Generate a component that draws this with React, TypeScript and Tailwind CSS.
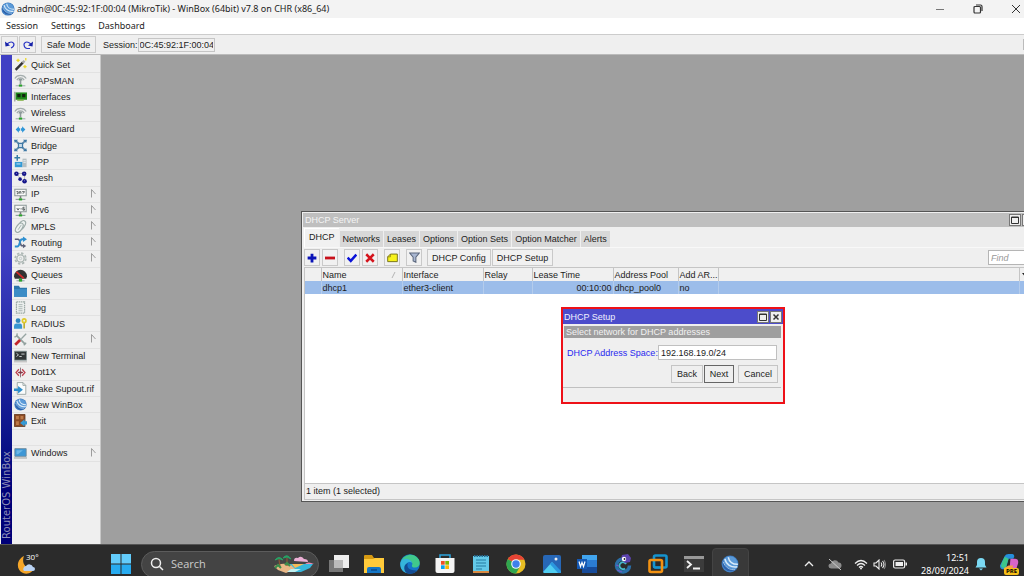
import { useState } from "react";
import type { ReactNode } from "react";

interface MenuEntry {
  label: string;
  icon: ReactNode;
  submenu?: boolean;
}

// --- Icons ---

function Icon({ children, className = "size-[13px]" }: { children: ReactNode; className?: string }) {
  return (
    <svg viewBox="0 0 16 16" className={`${className} shrink-0`} fill="none" aria-hidden="true">
      {children}
    </svg>
  );
}

const antenna = (
  <Icon>
    <path d="M1 5.5C4 .5 12 .5 15 5.5M3.5 7.500C5.500 4 10.500 4 12.500 7.500" stroke="#a4adad" strokeWidth="1.500" />
    <path d="M5.500 8a2.500 2.500 0 015 0zM7 7h2v6H7z" fill="#8d9999" />
    <path d="M2 14.500h12" stroke="#9aa" strokeWidth="1.200" />
    <path d="M6 13h4v2.500H6z" fill="#29a329" />
  </Icon>
);

const netBoard = (text: string) => (
  <Icon>
    <path d="M1 1.500h14v8H1z" fill="#f8f8f8" stroke="#8b9797" strokeWidth="1.300" />
    <path d={text} stroke="#555f5f" strokeWidth="1.200" />
    <path d="M7 10h2v3H7z" fill="#777" />
    <path d="M2 14h12" stroke="#899" strokeWidth="1.300" />
    <path d="M6 12.800h4v2.500H6z" fill="#29a329" />
  </Icon>
);

function WinBoxLogo({ className }: { className?: string }) {
  return (
    <Icon className={className}>
      <circle cx="8" cy="8" r="7.500" fill="#3a78bd" />
      <circle cx="8" cy="8" r="6.800" fill="#5b9ad8" />
      <path d="M2 4.500C3 10 8 13.500 14 12.500 11 15.500 5.500 15.500 2.500 11.500 1 9 1 6.500 2 4.500z" fill="#2b62ac" />
      <path d="M3.500 3.500C4.500 8.500 9 11.500 14.500 10.500M6.500 2C7 6 10.500 8.500 15 8.200" stroke="#d9ebfa" strokeWidth="1.300" />
      <path d="M2 6C3.500 11 8 13.500 12.500 13" stroke="#a9cdec" strokeWidth=".8" />
    </Icon>
  );
}

const menuEntries: MenuEntry[] = [
  {
    label: "Quick Set",
    icon: (
      <Icon>
        <path d="M2 14.500L11 5.500" stroke="#333" strokeWidth="3" />
        <path d="M10.500 6L13 3.500" stroke="#aaa" strokeWidth="3" />
        <path d="M5 1v4M3 3h4M13.500 8.500v4M11.500 10.500h4M14.500 0v3" stroke="#ecd826" strokeWidth="1.600" />
      </Icon>
    ),
  },
  { label: "CAPsMAN", icon: antenna },
  {
    label: "Interfaces",
    icon: (
      <Icon>
        <path d="M1 2v12" stroke="#9a9a9a" strokeWidth="1.500" />
        <path d="M2 3h14v9H2z" fill="#218a1c" />
        <path d="M4 5h4v4H4zM10 5h4v4h-4z" fill="#12230f" />
        <path d="M4 12.500h8" stroke="#7cae3d" strokeWidth="1.500" />
      </Icon>
    ),
  },
  { label: "Wireless", icon: antenna },
  {
    label: "WireGuard",
    icon: (
      <Icon>
        <path d="M2 8l4-4v2.500h1.500v3H6V12zM14 8l-4-4v2.500H8.500v3H10V12z" fill="#2e96d8" />
      </Icon>
    ),
  },
  {
    label: "Bridge",
    icon: (
      <Icon>
        <path d="M2 2l12 12M14 2L2 14" stroke="#5d88ab" strokeWidth="2.200" />
        <path d="M5.500 5.500h5v5h-5z" fill="#c9dce9" stroke="#3e78a5" strokeWidth="1.500" />
        <path d="M0 1h5L1 5zM16 1h-5l4 4zM0 15h5L1 11zM16 15h-5l4-4z" fill="#3e78a5" />
      </Icon>
    ),
  },
  {
    label: "PPP",
    icon: (
      <Icon>
        <path d="M4 0v7M.500 3.500h7" stroke="#367ca6" strokeWidth="1.800" />
        <path d="M1 8.500h9.500V15H1z" fill="#349ad5" />
        <path d="M10.500 4.500h5V15h-5z" fill="#b6bfc2" />
        <path d="M3 11h5M11.500 7h3M11.500 9h3" stroke="#eaf5fa" />
      </Icon>
    ),
  },
  {
    label: "Mesh",
    icon: (
      <Icon>
        <path d="M3 3h10M3 3l5 7M13 3v9" stroke="#777" strokeDasharray="1.500 1" />
        <circle cx="3" cy="3.500" r="2.800" fill="#17178a" />
        <circle cx="12.500" cy="3.500" r="2.800" fill="#17178a" />
        <circle cx="7.500" cy="10" r="2.200" fill="#17178a" />
        <circle cx="13" cy="12.500" r="2.800" fill="#17178a" />
        <path d="M2.500 3h1M12 3h1M12.500 12h1" stroke="#a9a9e6" />
      </Icon>
    ),
  },
  { label: "IP", icon: netBoard("M3 4.500h2v2.500H3.500M6.500 7V4.500h2V7M10 4.500h3L11 7"), submenu: true },
  { label: "IPv6", icon: netBoard("M3.500 5l1.500 2.500L6.500 5M8 6h1.500M13 4h-2v3.500h2V6h-2"), submenu: true },
  {
    label: "MPLS",
    icon: (
      <Icon>
        <ellipse cx="9.500" cy="6.500" rx="3.500" ry="6.500" transform="rotate(35 9.500 6.500)" fill="#eef2f1" stroke="#9caba8" strokeWidth="1.400" />
        <ellipse cx="6.500" cy="9.500" rx="3.500" ry="6.500" transform="rotate(35 6.500 9.500)" fill="#eef2f1" stroke="#9caba8" strokeWidth="1.400" />
        <path d="M5 12l4-6" stroke="#a5b4b1" strokeWidth="1.200" />
      </Icon>
    ),
    submenu: true,
  },
  {
    label: "Routing",
    icon: (
      <Icon>
        <path d="M1 4h4c3 0 2 8 5 8h2" stroke="#5a5f78" strokeWidth="2" />
        <path d="M1 13h3c4 0 2-9 6-9h2" stroke="#2e8fd0" strokeWidth="2.400" />
        <path d="M11 .500l5 3.500-5 3.500z" fill="#2e8fd0" />
        <path d="M11 9.500l4 2.700-4 2.800z" fill="#5a5f78" />
      </Icon>
    ),
    submenu: true,
  },
  {
    label: "System",
    icon: (
      <Icon>
        <circle cx="8" cy="8" r="6.500" stroke="#aeb8b6" strokeWidth="2.200" strokeDasharray="2.900 2.200" />
        <circle cx="8" cy="8" r="4.500" stroke="#a9b4b1" strokeWidth="1.600" fill="#efefef" />
        <circle cx="8" cy="8" r="1.500" stroke="#b8c2c0" />
      </Icon>
    ),
    submenu: true,
  },
  {
    label: "Queues",
    icon: (
      <Icon>
        <path d="M0 9a8 8 0 0116 0l-1 3H1z" fill="#333" />
        <path d="M3 3.500l9 8" stroke="#d42b2b" strokeWidth="2.200" />
        <path d="M3 14.500h10" stroke="#789" />
        <path d="M6 12h4v3.500H6z" fill="#29a329" />
      </Icon>
    ),
  },
  {
    label: "Files",
    icon: (
      <Icon>
        <path d="M0 1h6l1.500 2.500H16v11H0z" fill="#2b75ab" />
        <path d="M0 5h16v9.500H0z" fill="#3b8cc6" />
      </Icon>
    ),
  },
  {
    label: "Log",
    icon: (
      <Icon>
        <path d="M3 1h10v14H3z" fill="#edf0ef" stroke="#9daaa7" strokeWidth="1.500" strokeDasharray="2 .7" />
        <path d="M5.500 4.500h5M5.500 7h5M5.500 9.500h5M5.500 12h5" stroke="#9daaa7" />
      </Icon>
    ),
  },
  {
    label: "RADIUS",
    icon: (
      <Icon>
        <circle cx="5" cy="4.500" r="3" fill="#2f86bf" />
        <path d="M0 14.500V11q0-3 3-3h4q3 0 3 3v3.500z" fill="#3a96d1" />
        <path d="M12.500 7v7" stroke="#b7a51c" strokeWidth="1.800" />
        <circle cx="12.500" cy="4.500" r="2.200" stroke="#dfca29" strokeWidth="2" />
      </Icon>
    ),
  },
  {
    label: "Tools",
    icon: (
      <Icon>
        <path d="M3 3l11 11" stroke="#91a09e" strokeWidth="2.200" />
        <path d="M.500 4.500q3 1 3.500-4M12 15l3-3" stroke="#91a09e" strokeWidth="1.600" />
        <path d="M9 7l6-6" stroke="#96a4a2" strokeWidth="1.600" />
        <path d="M1.500 14.500l6-6" stroke="#c2252c" strokeWidth="3.400" />
      </Icon>
    ),
    submenu: true,
  },
  {
    label: "New Terminal",
    icon: (
      <Icon>
        <path d="M.500 1.500h15v11H.500z" fill="#303536" stroke="#899" />
        <path d="M3 4l2.500 2L3 8M6.500 8h3M9 5h4" stroke="#e8eeee" />
        <path d="M0 14.500h16" stroke="#aaa" />
      </Icon>
    ),
  },
  {
    label: "Dot1X",
    icon: (
      <Icon>
        <path d="M6 4L2.500 8 6 12M10 4l3.500 4-3.500 4" stroke="#be4452" strokeWidth="1.600" />
        <path d="M8 2v12" stroke="#775d68" />
        <path d="M5 8h6" stroke="#8a3848" strokeWidth="1.500" />
        <circle cx="8" cy="8" r="1.500" fill="#8a3848" />
      </Icon>
    ),
  },
  {
    label: "Make Supout.rif",
    icon: (
      <Icon>
        <path d="M4 .700h7l3.500 3.500v11H4z" fill="#fafcfc" stroke="#8f9d9b" />
        <path d="M11 .700v3.500h3.500" stroke="#8f9d9b" />
        <path d="M0 8h5V5l6 4.500L5 14v-3H0z" fill="#2d8ecb" />
      </Icon>
    ),
  },
  { label: "New WinBox", icon: <WinBoxLogo className="size-[13px]" /> },
  {
    label: "Exit",
    icon: (
      <Icon>
        <path d="M.500.500h13v15H.500z" fill="#8d4c25" stroke="#5f3218" />
        <path d="M2.500 2.500h3.500v4H2.500zM8 2.500h3.500v4H8zM2.500 9h3.500v4.500H2.500z" fill="#bd7a49" />
        <path d="M16 9h-3V6.500L7.500 11l5.500 4.500V13h3z" fill="#349ad5" />
      </Icon>
    ),
  },
];

const windowsEntry: MenuEntry = {
  label: "Windows",
  icon: (
    <Icon>
      <path d="M1 2h14v9.500H1z" fill="#3d97d6" stroke="#6d8798" />
      <path d="M3 4h8L5 9H3z" fill="#6db7e6" />
      <path d="M0 13.500h16" stroke="#a9adae" strokeWidth="1.500" />
    </Icon>
  ),
  submenu: true,
};

const tabs = ["DHCP", "Networks", "Leases", "Options", "Option Sets", "Option Matcher", "Alerts"];

// --- Sidebar ---

function SidebarItem({ label, icon, submenu }: MenuEntry) {
  return (
    <li className="border-b border-[#e2e2e2]">
      <button className="flex h-full w-full items-center pl-[2px] pr-1 text-left">
        {icon}
        <span className="ml-1 flex-1 whitespace-nowrap">{label}</span>
        {submenu && (
          <svg viewBox="0 0 6 9" className="mb-[2px] h-[9px] w-[6px]" fill="none" aria-hidden="true">
            <path d="M1.500 8.500V.500L5.500 5" stroke="#9c9c9c" />
          </svg>
        )}
      </button>
    </li>
  );
}

function Sidebar() {
  return (
    <aside className="flex w-[101px] shrink-0 border-r border-[#c8c8c8] bg-[#efefef] pl-px">
      <div className="flex w-[11px] items-end justify-center bg-linear-to-b from-[#4040c4] from-40% to-[#000078] to-90% pb-[5px]">
        <span className="rotate-180 whitespace-nowrap font-['DejaVu_Sans'] text-[10px] leading-[11px] text-[#8f8fb8] [writing-mode:vertical-rl]">
          RouterOS WinBox
        </span>
      </div>
      <nav className="flex-1 pt-[2px]">
        <ul className="grid h-[405px] auto-rows-fr">
          {menuEntries.map((entry) => (
            <SidebarItem key={entry.label} {...entry} />
          ))}
          <li className="border-b border-[#e2e2e2]" />
          <SidebarItem {...windowsEntry} />
        </ul>
      </nav>
    </aside>
  );
}

// --- Windows ---

function FrameButton({ kind }: { kind: "maximize" | "close" }) {
  return (
    <button
      aria-label={kind}
      className="flex size-3 shrink-0 items-center justify-center border border-[#777] bg-[#efefef]"
    >
      <svg viewBox="0 0 8 8" className="size-2" fill="none" stroke="#333" aria-hidden="true">
        {kind === "maximize" ? <path d="M.500 1h7v6.500h-7zM.500 1.500h7" /> : <path d="M1.500 1.500l5 5M6.500 1.500l-5 5" strokeWidth="1.500" />}
      </svg>
    </button>
  );
}

function ToolButton({ label, children, className = "" }: { label: string; children: ReactNode; className?: string }) {
  return (
    <button
      aria-label={label}
      className={`flex h-[17px] w-4 items-center justify-center border border-[#c9c9c9] bg-[#f1f1f1] ${className}`}
    >
      {children}
    </button>
  );
}

function DhcpServerWindow() {
  const [activeTab, setActiveTab] = useState("DHCP");

  return (
    <section className="absolute -right-[12px] bottom-[42px] left-[200px] top-[156px] flex flex-col border border-[#555] bg-[#efefef] p-px">
      <header className="flex h-[14px] shrink-0 items-center bg-[#bfbfbf] pl-[2px]">
        <h2 className="flex-1 text-[#f4f4f4]">DHCP Server</h2>
        <div className="flex gap-px">
          <FrameButton kind="maximize" />
          <FrameButton kind="close" />
        </div>
      </header>

      <div className="flex flex-1 flex-col pl-px">
        <div role="tablist" className="flex h-5 items-end gap-px">
          {tabs.map((tab) => (
            <button
              key={tab}
              role="tab"
              aria-selected={tab === activeTab}
              onClick={() => setActiveTab(tab)}
              className={
                tab === activeTab
                  ? "h-[19px] border-l border-t border-white bg-[#f1f1f1] px-1 pb-[2px]"
                  : "h-4 bg-[#d8d8d8] px-[3px]"
              }
            >
              {tab}
            </button>
          ))}
        </div>

        <div className="flex h-5 items-center border-t border-[#f8f8f8]">
          <ToolButton label="Add">
            <Icon className="size-[10px]">
              <path d="M8 1v14M1 8h14" stroke="#0b14b8" strokeWidth="4.500" />
            </Icon>
          </ToolButton>
          <ToolButton label="Remove" className="ml-[2px]">
            <Icon className="size-[10px]">
              <path d="M0 8h16" stroke="#c8101a" strokeWidth="4.500" />
            </Icon>
          </ToolButton>
          <ToolButton label="Enable" className="ml-[6px]">
            <Icon className="size-[10px]">
              <path d="M1 7.500l5 5 9-10" stroke="#0a12d8" strokeWidth="4" />
            </Icon>
          </ToolButton>
          <ToolButton label="Disable" className="ml-[2px]">
            <Icon className="size-[10px]">
              <path d="M2 2l12 12M14 2L2 14" stroke="#d4141c" strokeWidth="4" />
            </Icon>
          </ToolButton>
          <ToolButton label="Comment" className="ml-[6px]">
            <Icon className="size-[11px]">
              <path d="M5 3h10v11H1V7z" fill="#f7f21b" stroke="#77721b" strokeWidth="1.400" />
              <path d="M5 3v4H1" stroke="#77721b" />
            </Icon>
          </ToolButton>
          <ToolButton label="Filter" className="ml-[6px]">
            <Icon className="size-[11px]">
              <path d="M1 1.500h14l-5 6V15l-4-2V7.500z" fill="#a9b7d2" stroke="#5c687e" strokeWidth="1.500" />
            </Icon>
          </ToolButton>
          <button className="ml-[5px] h-[17px] border border-[#c9c9c9] bg-[#f1f1f1] px-1">DHCP Config</button>
          <button className="ml-px h-[17px] border border-[#c9c9c9] bg-[#f1f1f1] px-1">DHCP Setup</button>
          <input
            aria-label="Find"
            placeholder="Find"
            className="-mr-[18px] ml-auto h-[15px] w-[64px] border border-[#b5b5b5] bg-white px-[2px] italic outline-none placeholder:text-[#999]"
          />
        </div>

        <div className="flex-1 border-l border-t border-[#c5c5c5] bg-white">
          <table className="w-full table-fixed border-collapse text-left">
            <colgroup>
              <col className="w-4" />
              <col className="w-[81px]" />
              <col className="w-[81px]" />
              <col className="w-[49px]" />
              <col className="w-[81px]" />
              <col className="w-[65px]" />
              <col className="w-10" />
              <col />
              <col className="w-[14px]" />
            </colgroup>
            <thead>
              <tr className="h-[13px] bg-[#f0f0f0] [&>th]:whitespace-nowrap [&>th]:border-r [&>th]:border-[#c5c5c5] [&>th]:px-px [&>th]:font-normal">
                <th />
                <th>
                  <span className="flex items-center justify-between">
                    Name
                    <svg viewBox="0 0 6 8" className="mr-1 h-2 w-[6px]" fill="none" aria-hidden="true">
                      <path d="M1 7L4 1" stroke="#b5b5b5" />
                    </svg>
                  </span>
                </th>
                <th>Interface</th>
                <th>Relay</th>
                <th>Lease Time</th>
                <th>Address Pool</th>
                <th>Add AR...</th>
                <th />
                <th>
                  <svg viewBox="0 0 5 3" className="ml-px h-[3px] w-[5px]" aria-hidden="true">
                    <path d="M0 0h5L2.500 3z" fill="#222" />
                  </svg>
                </th>
              </tr>
            </thead>
            <tbody>
              <tr className="h-[13px] bg-[#9cbdea] [&>td]:border-r [&>td]:border-[#b4ccec] [&>td]:px-px">
                <td />
                <td>dhcp1</td>
                <td>ether3-client</td>
                <td />
                <td className="text-right">00:10:00</td>
                <td>dhcp_pool0</td>
                <td>no</td>
                <td />
                <td />
              </tr>
            </tbody>
          </table>
        </div>

        <footer className="flex h-[17px] shrink-0 items-center border-y border-l border-[#c5c5c5] pb-px pl-px">
          1 item (1 selected)
        </footer>
      </div>
    </section>
  );
}

function DhcpSetupDialog() {
  return (
    <section
      role="dialog"
      aria-labelledby="setup-title"
      className="absolute left-[460px] top-[252px] w-[224px] border-2 border-[#ee1118] bg-[#efefef]"
    >
      <header className="flex h-[15px] items-center bg-[#4c4ccb] px-px">
        <h2 id="setup-title" className="flex-1 text-[#f0f0ff]">
          DHCP Setup
        </h2>
        <div className="flex gap-px">
          <FrameButton kind="maximize" />
          <FrameButton kind="close" />
        </div>
      </header>
      <p className="ml-px mr-[2px] mt-[2px] h-3 bg-[#9f9f9f] pl-[2px] leading-3 text-[#f2f2f2]">
        Select network for DHCP addresses
      </p>
      <div className="mr-[6px] mt-[7px] flex items-center">
        <label htmlFor="address-space" className="ml-1 w-[91px] whitespace-nowrap text-[#2828f0]">
          DHCP Address Space:
        </label>
        <input
          id="address-space"
          defaultValue="192.168.19.0/24"
          className="h-[15px] min-w-0 flex-1 border border-[#c0c0c0] bg-white px-[2px] outline-none"
        />
      </div>
      <div className="mr-[5px] mt-[5px] flex justify-end">
        <button className="h-[18px] w-8 border border-[#c5c5c5]">Back</button>
        <button className="ml-px h-[18px] w-[30px] border border-[#666]">Next</button>
        <button className="ml-1 h-[18px] w-10 border border-[#c5c5c5]">Cancel</button>
      </div>
      <footer className="mr-[2px] mt-1 h-[15px] border-t border-[#c0c0c0]" />
    </section>
  );
}

// --- Taskbar ---

const apps: { name: string; icon: ReactNode; active?: boolean }[] = [
  {
    name: "Task view",
    icon: (
      <>
        <path d="M0 6h14v12H0z" fill="#777" />
        <path d="M5 1h15v13H5z" fill="#eee" />
        <path d="M5 6h9v8H5z" fill="#bbb" />
      </>
    ),
  },
  {
    name: "File Explorer",
    icon: (
      <>
        <path d="M0 2q0-1 1-1h7l2 3h9q1 0 1 1v4H0z" fill="#d69a13" />
        <path d="M0 5h9l2-1h9v15H0z" fill="#ffca3a" />
        <path d="M3 19v-4q0-2 2-2h10q2 0 2 2v4z" fill="#1476c6" />
        <path d="M7 16h6" stroke="#0b4b8b" strokeWidth="1.500" />
      </>
    ),
  },
  {
    name: "Edge",
    icon: (
      <>
        <circle cx="10" cy="10" r="9.800" fill="#1576c9" />
        <path d="M1 7C4 0 14-2 18.500 5c3 5 0 9-4 8.500-3 0-3-2-2-3.500C12 6 5 4 1 7z" fill="#40c98b" />
        <path d="M.500 8C3 3 10 4 12.500 9 8 6 3 11 7 19 2 18-.500 13 .500 8z" fill="#35b5dc" />
        <path d="M8 9c-2 4 1 8 9 7.500-3 4-8 4-11 2C3 15 4 10 8 9z" fill="#124b93" />
      </>
    ),
  },
  {
    name: "Store",
    icon: (
      <>
        <path d="M5 5V1h10v4" stroke="#2ca4dd" strokeWidth="1.500" />
        <path d="M.500 4h19v13q0 2-2 2h-15q-2 0-2-2z" fill="#f4f4f4" />
        <path d="M6 7h3.700v3.700H6z" fill="#f04f25" />
        <path d="M10.300 7H14v3.700h-3.700z" fill="#7cb804" />
        <path d="M6 11.300h3.700V15H6z" fill="#06a3ee" />
        <path d="M10.300 11.300H14V15h-3.700z" fill="#fab706" />
      </>
    ),
  },
  {
    name: "Notepad",
    icon: (
      <>
        <path d="M2 2h16v17H2z" fill="#63c9e8" />
        <path d="M2 17h16v2H2z" fill="#d98a42" />
        <path d="M3 2h14" stroke="#276b91" strokeWidth="2" strokeDasharray="1.500 1" />
        <path d="M5 6h10M5 9h10M5 12h10M5 15h6" stroke="#247da2" strokeWidth="1.200" />
      </>
    ),
  },
  {
    name: "Chrome",
    icon: (
      <>
        <circle cx="10" cy="10" r="9.500" fill="#e7bd23" />
        <path d="M10 10L1.700 5.200A9.500 9.500 0 0118.500 5.700H10z" fill="#e64335" />
        <path d="M10 10L1.700 5.200A9.500 9.500 0 0010 19.500l4-7z" fill="#2fa650" />
        <circle cx="10" cy="10" r="4.800" fill="#f5f7fa" />
        <circle cx="10" cy="10" r="3.700" fill="#3f81ec" />
      </>
    ),
  },
  {
    name: "Photos",
    icon: (
      <>
        <rect x="1" y="1" width="18" height="18" rx="2" fill="#2767b6" />
        <path d="M1 18L10 8l9 10-1 1H2z" fill="#50cef1" />
        <path d="M8 10l2-2 9 9v2h-3z" fill="#2a98df" />
        <circle cx="14" cy="5" r="1.500" fill="#eee" />
      </>
    ),
  },
  {
    name: "Word",
    icon: (
      <>
        <path d="M5 1h15v18H5z" fill="#2b7cd3" />
        <path d="M5 1h15v5H5z" fill="#41a5ee" />
        <path d="M5 13h15v6H5z" fill="#174b9a" />
        <path d="M0 5h10v10H0z" fill="#1558b2" />
        <path d="M2 7.500l1.500 5 1.500-4 1.500 4 1.500-5" stroke="#fff" strokeWidth="1.200" />
      </>
    ),
  },
  {
    name: "Chameleon",
    icon: (
      <>
        <path d="M16.500 11.500a6.500 6.500 0 11-7-6.500" stroke="#2a6fa8" strokeWidth="3.500" />
        <path d="M13 10a3.500 3.500 0 10-1 4.500" stroke="#44b9cc" strokeWidth="1.800" />
        <path d="M9 1l6-1 3 4-1 4-5 1-4-4z" fill="#5c43af" />
        <circle cx="11" cy="5" r="2.200" fill="#fff" />
        <circle cx="11.500" cy="5" r=".9" fill="#222" />
        <path d="M4 16l5 2M3 11l3 1" stroke="#7c55c5" />
      </>
    ),
  },
  {
    name: "VMware",
    icon: (
      <>
        <rect x="6" y="1.500" width="12.500" height="12" rx="1.500" stroke="#1594cf" strokeWidth="2.600" />
        <rect x="1.500" y="6" width="12.500" height="12" rx="1.500" stroke="#f39212" strokeWidth="2.600" />
        <path d="M6 9.500v3q0 1 1 1h5" stroke="#1594cf" strokeWidth="2" />
      </>
    ),
  },
  {
    name: "Terminal",
    icon: (
      <>
        <path d="M0 2h20v16H0z" fill="#3c3c3c" />
        <path d="M0 2h20v3H0z" fill="#989898" />
        <path d="M3 7l4 3.500L3 14M9 14.500h7" stroke="#f2f2f2" strokeWidth="1.800" />
      </>
    ),
  },
  { name: "WinBox", icon: null, active: true },
];

function Taskbar() {
  return (
    <footer className="h-8 shrink-0 overflow-hidden border-t border-[#555] bg-[#2b2b2b] font-['Open_Sans',sans-serif] text-white">
      <div className="flex h-[38px] items-center">
        <button className="relative ml-[17px] h-5 w-6" aria-label="Weather">
          <svg viewBox="0 0 20 20" className="mt-px size-5" aria-hidden="true">
            <path d="M7 1C-1 5-1 15 6 18c5 2 10-1 11-5C9 15 4 8 7 1z" fill="#f5a629" />
            <path d="M7 16a3 3 0 012-5 4 4 0 017 1 2 2 0 010 4z" fill="#b9d2f3" />
          </svg>
          <span className="absolute -top-[3px] left-[9px] text-[8px] leading-3">30°</span>
        </button>

        <button className="ml-[70px]" aria-label="Start">
          <svg viewBox="0 0 20 20" className="size-5" aria-hidden="true">
            <path d="M0 0h9.500v9.500H0zM10.500 0H20v9.500h-9.500z" fill="#63ccfb" />
            <path d="M0 10.500h9.500V20H0zM10.500 10.500H20V20h-9.500z" fill="#27abf0" />
          </svg>
        </button>

        <label className="ml-[10px] flex h-[27px] w-[178px] items-center rounded-full border border-[#5c5c5c] bg-[#444] pl-2 pr-1">
          <svg viewBox="0 0 14 14" className="size-[14px] shrink-0" fill="none" stroke="#eee" strokeWidth="1.500" aria-hidden="true">
            <circle cx="6" cy="6" r="4.500" />
            <path d="M9.500 9.500L13 13" />
          </svg>
          <input
            aria-label="Search"
            placeholder="Search"
            className="ml-[7px] min-w-0 flex-1 bg-transparent text-[11px] outline-none placeholder:text-[#ccc]"
          />
          <svg viewBox="0 0 40 18" className="h-[18px] w-10 shrink-0" fill="none" aria-hidden="true">
            <path d="M15 9h24l-3 4-9 4H12z" fill="#36b6dc" />
            <path d="M18 9h12l-9 4z" fill="#f7bb58" />
            <path d="M0 11q8-4 17-1l4 4-9 4-8-3z" fill="#e9b887" />
            <path d="M17 14h10l-6 3h-8z" fill="#bff0f1" />
            <path d="M6 12L5 4M13 11V3" stroke="#875638" strokeWidth="1.300" />
            <path d="M1 5q4-5 8 0L5 3.500zM9 3q4-5 8 1l-4-2z" fill="#28a164" stroke="#28a164" />
            <path d="M1 13l3-3 3 3M11 10l2-2 3 3" stroke="#398d4c" strokeWidth="2" />
            <path d="M20 6q0-4 4-3 3-3 6 1 4 0 4 3z" fill="#ecb0d6" />
            <path d="M31 9q3-3 9 0z" fill="#f08ab5" />
          </svg>
        </label>

        <div className="ml-[2px] flex w-[428px] items-center">
          {apps.map((app) => (
            <button
              key={app.name}
              aria-label={app.name}
              className={
                app.active
                  ? "flex h-8 flex-1 items-center justify-center rounded border border-[#444] bg-[#393939]"
                  : "flex h-8 flex-1 items-center justify-center"
              }
            >
              {app.icon ? (
                <svg viewBox="0 0 20 20" className="size-5" fill="none" aria-hidden="true">
                  {app.icon}
                </svg>
              ) : (
                <WinBoxLogo className="size-[18px]" />
              )}
            </button>
          ))}
        </div>

        <div className="ml-auto flex items-center">
          <button aria-label="Hidden icons">
            <svg viewBox="0 0 10 6" className="h-[6px] w-[10px]" fill="none" stroke="#eee" strokeWidth="1.300" aria-hidden="true">
              <path d="M1 5l4-4 4 4" />
            </svg>
          </button>
          <svg viewBox="0 0 14 11" className="ml-[14px] h-[11px] w-[14px]" fill="none" aria-hidden="true">
            <path d="M3 9.500a2.500 2.500 0 010-5 4 4 0 017.500-1 3 3 0 010 6z" fill="#8c8c8c" />
            <path d="M1 0l12 11" stroke="#ccc" />
          </svg>
          <svg viewBox="0 0 14 11" className="ml-3 h-[11px] w-[14px]" fill="none" stroke="#eee" strokeWidth="1.200" aria-hidden="true">
            <path d="M1 4.500q6-6 12 0M3 6.500q4-4 8 0M5 8.500q2-2 4 0" />
            <circle cx="7" cy="9.500" r="1" fill="#eee" stroke="none" />
          </svg>
          <svg viewBox="0 0 13 11" className="ml-[5px] h-[11px] w-[13px]" fill="none" stroke="#eee" strokeWidth="1.100" aria-hidden="true">
            <path d="M1 4h2l3-3v9L3 7H1zM8 3.500q1.500 2 0 4M9.500 2q3 3.500 0 7" />
            <path d="M11 1q3 4.500 0 9" stroke="#888" />
          </svg>
          <svg viewBox="0 0 14 10" className="ml-[7px] h-[10px] w-[14px]" fill="none" aria-hidden="true">
            <rect x=".6" y="1" width="11" height="8" rx="1.500" stroke="#eee" strokeWidth="1.200" />
            <path d="M2.500 3h7.500v4H2.500zM12.500 3.500h1.500v3h-1.500z" fill="#eee" />
          </svg>
          <div className="ml-[14px] text-right font-['Noto_Sans',sans-serif] text-[9px] leading-[13px]">
            <p>12:51</p>
            <p>28/09/2024</p>
          </div>
          <svg viewBox="0 0 12 14" className="ml-[6px] h-[14px] w-3" aria-hidden="true">
            <path d="M6 1a4 4 0 014 4v3l1.500 2.500H.500L2 8V5a4 4 0 014-4z" fill="#7bd9f3" />
            <path d="M4 11.500h4l-2 2z" fill="#7bd9f3" />
          </svg>
          <div className="relative ml-[13px] mr-1 size-5">
            <svg viewBox="0 0 20 20" className="size-[19px]" aria-hidden="true">
              <path d="M5 2q1-2 4-2h4q2 0 2 3l-1 2H9L6 16H3q-3 0-3-4z" fill="#258fdd" />
              <path d="M5 3q-3 5-4 10 2 3 5 2L9 5z" fill="#3dc58a" />
              <path d="M11 5h5q4 0 3 5l-2 6h-7z" fill="#d765c9" />
              <path d="M9 12h5l-2 6H6q-2 0-2-3z" fill="#f6a044" />
            </svg>
            <span className="absolute -bottom-px left-1 rounded-[2px] bg-[#f7be17] px-[2px] text-[6px] font-bold leading-[7px] text-black">
              PRE
            </span>
          </div>
        </div>
      </div>
    </footer>
  );
}

export default function App() {
  return (
    <div className="flex h-screen flex-col overflow-hidden bg-[#9f9f9f] font-['Liberation_Sans',Arial,sans-serif] text-[9px] leading-3 text-[#1c1c1c]">
      <header className="flex h-[18px] shrink-0 items-center bg-[#f3f3f3] text-[#222]">
        <WinBoxLogo className="ml-[1px] size-[14px]" />
        <h1 className="ml-[2px] flex-1 font-['Noto_Sans',sans-serif]">
          admin@0C:45:92:1F:00:04 (MikroTik) - WinBox (64bit) v7.8 on CHR (x86_64)
        </h1>
        <div className="flex items-center gap-[28px] pr-[3px]">
          <button aria-label="Minimize">
            <svg viewBox="0 0 10 10" className="size-[10px]" stroke="#777" aria-hidden="true">
              <path d="M1 5.500h8" />
            </svg>
          </button>
          <button aria-label="Restore">
            <svg viewBox="0 0 10 10" className="size-[10px]" fill="none" stroke="#333" strokeWidth="1.200" aria-hidden="true">
              <rect x="1" y="2.500" width="6.500" height="6.500" rx="1" />
              <path d="M3 1h4.500Q9 1 9 2.500V7" />
            </svg>
          </button>
          <button aria-label="Close">
            <svg viewBox="0 0 10 10" className="size-[10px]" stroke="#333" aria-hidden="true">
              <path d="M1 1l8 8M9 1L1 9" />
            </svg>
          </button>
        </div>
      </header>

      <nav className="flex h-4 shrink-0 items-center gap-[13px] bg-white pl-[6px] font-['Noto_Sans',sans-serif]">
        <button>Session</button>
        <button>Settings</button>
        <button>Dashboard</button>
      </nav>

      <div className="flex h-[21px] shrink-0 items-center border-y border-t-[#ccc] border-b-[#bbb] bg-[#efefef] pl-px">
        <button aria-label="Undo" className="flex h-[17px] w-[17px] items-center justify-center border border-[#ccc]">
          <svg viewBox="0 0 10 10" className="size-[10px]" fill="none" aria-hidden="true">
            <path d="M2 4q5-4 7 0 0 3-3 4" stroke="#2a35c4" strokeWidth="1.200" />
            <path d="M0 1.500l.500 5 4.500-1z" fill="#1722a8" />
          </svg>
        </button>
        <button aria-label="Redo" className="ml-px flex h-[17px] w-[17px] items-center justify-center border border-[#ccc]">
          <svg viewBox="0 0 10 10" className="size-[10px]" fill="none" aria-hidden="true">
            <path d="M8 4Q3 0 1 4q0 4 3 4.500h3" stroke="#2a35c4" strokeWidth="1.200" />
            <path d="M10 1.500l-.500 5-4.500-1z" fill="#1722a8" />
          </svg>
        </button>
        <button className="ml-[5px] h-[17px] w-[55px] border border-[#ccc]">Safe Mode</button>
        <label htmlFor="session" className="ml-[7px]">
          Session:
        </label>
        <input
          id="session"
          readOnly
          value="0C:45:92:1F:00:04"
          className="h-[14px] w-[77px] border border-[#c5c5c5] bg-[#efefef] px-px outline-none"
        />
        <span className="ml-auto h-[11px] w-px bg-[#bbb]" />
      </div>

      <main className="flex min-h-0 flex-1">
        <Sidebar />
        <div className="relative min-w-0 flex-1 overflow-hidden">
          <DhcpServerWindow />
          <DhcpSetupDialog />
        </div>
      </main>

      <Taskbar />
    </div>
  );
}
